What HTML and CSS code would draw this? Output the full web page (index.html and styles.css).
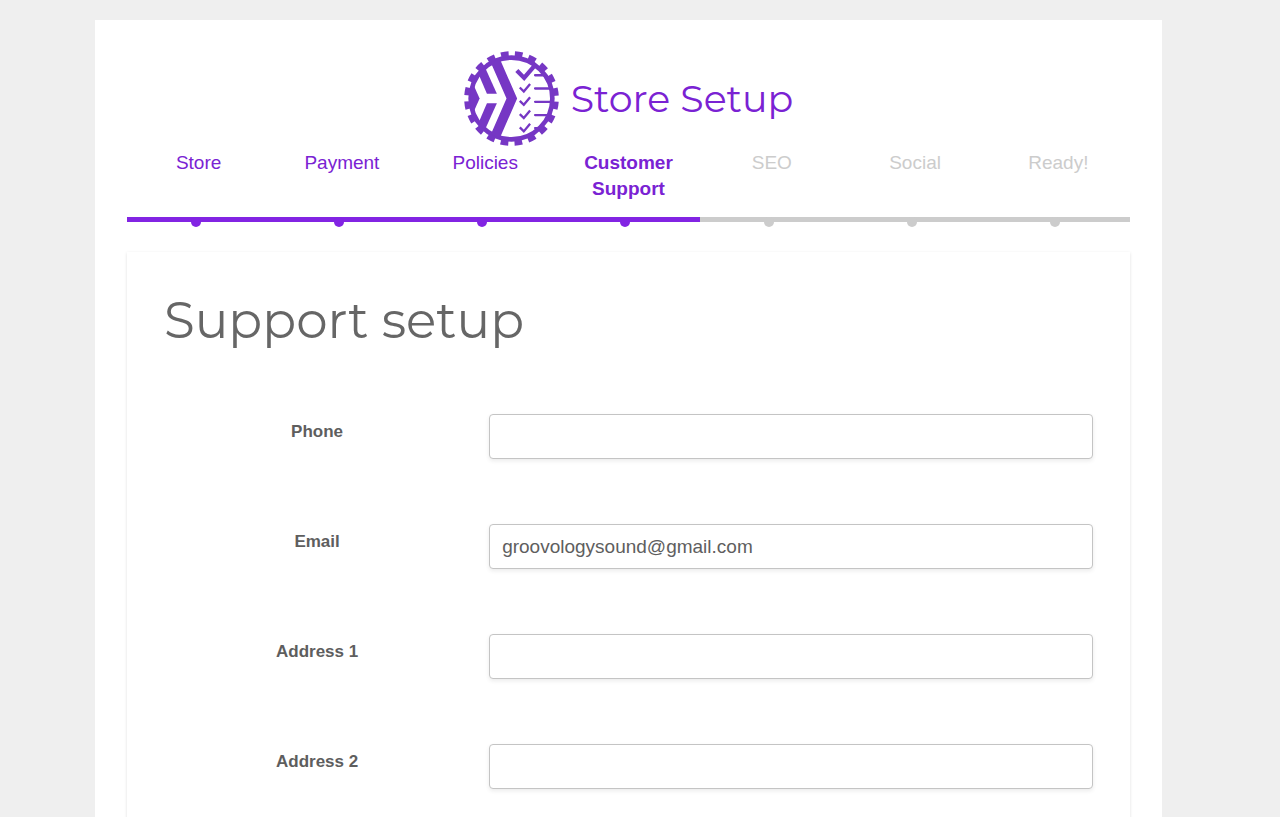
FILE: index.html
```html
<!DOCTYPE html>
<html lang="en">
<head>
  <meta charset="UTF-8">
  <meta name="viewport" content="width=device-width, initial-scale=1.0">
  <title>Store Setup</title>
  <link rel="stylesheet" href="styles.css">
</head>
<body>
<div class="wizard">
  <header class="brand">
    <svg class="logo" viewBox="24 20 286 286" aria-hidden="true">
      <defs>
        <clipPath id="disc"><circle cx="167" cy="163" r="124" /></clipPath>
      </defs>
      <!-- gear -->
      <circle class="logo-line" cx="167" cy="163" r="123" stroke-width="14" />
      <circle class="logo-line" cx="167" cy="163" r="134" stroke-width="17"
        pathLength="800" stroke-dasharray="22 18" stroke-dashoffset="-9" />
      <!-- chevrons -->
      <g class="logo-fill" clip-path="url(#disc)">
        <path d="M96 35H128L184 163L128 291H96L152 163Z" />
        <path d="M56 62H84L123 149H93Z" />
        <path d="M56 264H84L123 177H93Z" />
        <path d="M34 80L71 163L34 246Z" />
      </g>
      <!-- checklist -->
      <path class="logo-line" d="M183 79L205 101L240 60" stroke-width="13" />
      <g class="logo-line" stroke-width="7">
        <path d="M192 130L204 142L223 119" />
        <path d="M192 170L204 182L223 159" />
        <path d="M192 210L204 222L223 199" />
        <path d="M192 250L204 262L223 239" />
        <path d="M238 93H268M238 133H288M238 173H288M238 213H284M238 252H262" stroke-width="7" stroke-linecap="round" />
      </g>
    </svg>
    <span class="brand-name">Store Setup</span>
  </header>

  <ol class="steps">
    <li class="done">Store</li>
    <li class="done">Payment</li>
    <li class="done">Policies</li>
    <li class="active">Customer Support</li>
    <li>SEO</li>
    <li>Social</li>
    <li>Ready!</li>
  </ol>

  <main class="card">
    <h1>Support setup</h1>
    <form>
      <div class="field">
        <label for="phone">Phone</label>
        <input type="text" id="phone">
      </div>
      <div class="field">
        <label for="email">Email</label>
        <input type="text" id="email" value="groovologysound@gmail.com">
      </div>
      <div class="field">
        <label for="address1">Address 1</label>
        <input type="text" id="address1">
      </div>
      <div class="field">
        <label for="address2">Address 2</label>
        <input type="text" id="address2">
      </div>
    </form>
  </main>
</div>
</body>
</html>
```
FILE: styles.css
```css
* {
  box-sizing: border-box;
}

body {
  margin: 0;
  padding: 20px 118px 0 95px;
  background: #efefef;
  color: #5e5e5e;
  font-family: "Liberation Sans", Arial, sans-serif;
}

.wizard {
  padding: 31px 32px;
  background: #fff;
}

.brand {
  display: flex;
  align-items: center;
  justify-content: center;
  gap: 12px;
}

.logo {
  width: 95px;
  height: 95px;
}

.logo-fill {
  fill: #7637c4;
}

.logo-line {
  fill: none;
  stroke: #7637c4;
}

.brand-name {
  color: #7a22d3;
  font-family: Montserrat, Inter, sans-serif;
  font-size: 38px;
  font-weight: 400;
}

/* Progress steps */
.steps {
  display: flex;
  margin: 4px 0 30px;
  padding: 0;
  list-style: none;
  color: #ccc;
  font-size: 19px;
  line-height: 26px;
  text-align: center;
}

.steps li {
  position: relative;
  flex: 1 1 0;
  padding: 0 24px 15px;
  border-bottom: 5px solid #ccc;
}

/* Dot hanging under the line */
.steps li::after {
  content: "";
  position: absolute;
  left: 50%;
  bottom: -10px;
  width: 10px;
  height: 10px;
  margin-left: -8px;
  border-radius: 50%;
  background: #ccc;
}

.steps .done,
.steps .active {
  border-color: #8224e3;
  color: #7a22d3;
}

.steps .done::after,
.steps .active::after {
  background: #8224e3;
}

.steps .active {
  font-weight: bold;
}

/* Form card */
.card {
  padding: 37px 37px 64px;
  box-shadow: 0 1px 3px rgba(0, 0, 0, .13);
}

h1 {
  margin: 0 0 61px;
  color: #666;
  font-family: Montserrat, Inter, sans-serif;
  font-size: 50px;
  font-weight: 400;
  line-height: 64px;
}

.field {
  display: grid;
  grid-template-columns: 1fr 65%;
  column-gap: 19px;
  margin-bottom: 65px;
}

.field label {
  padding-top: 8px;
  font-size: 17px;
  font-weight: bold;
  line-height: 20px;
  text-align: center;
}

.field input {
  width: 100%;
  height: 45px;
  padding: 0 12px;
  border: 1px solid #c4c4c4;
  border-radius: 4px;
  background: #fff;
  box-shadow: 0 2px 4px rgba(0, 0, 0, .08);
  color: #5e5e5e;
  font: inherit;
  font-size: 19px;
}
```
